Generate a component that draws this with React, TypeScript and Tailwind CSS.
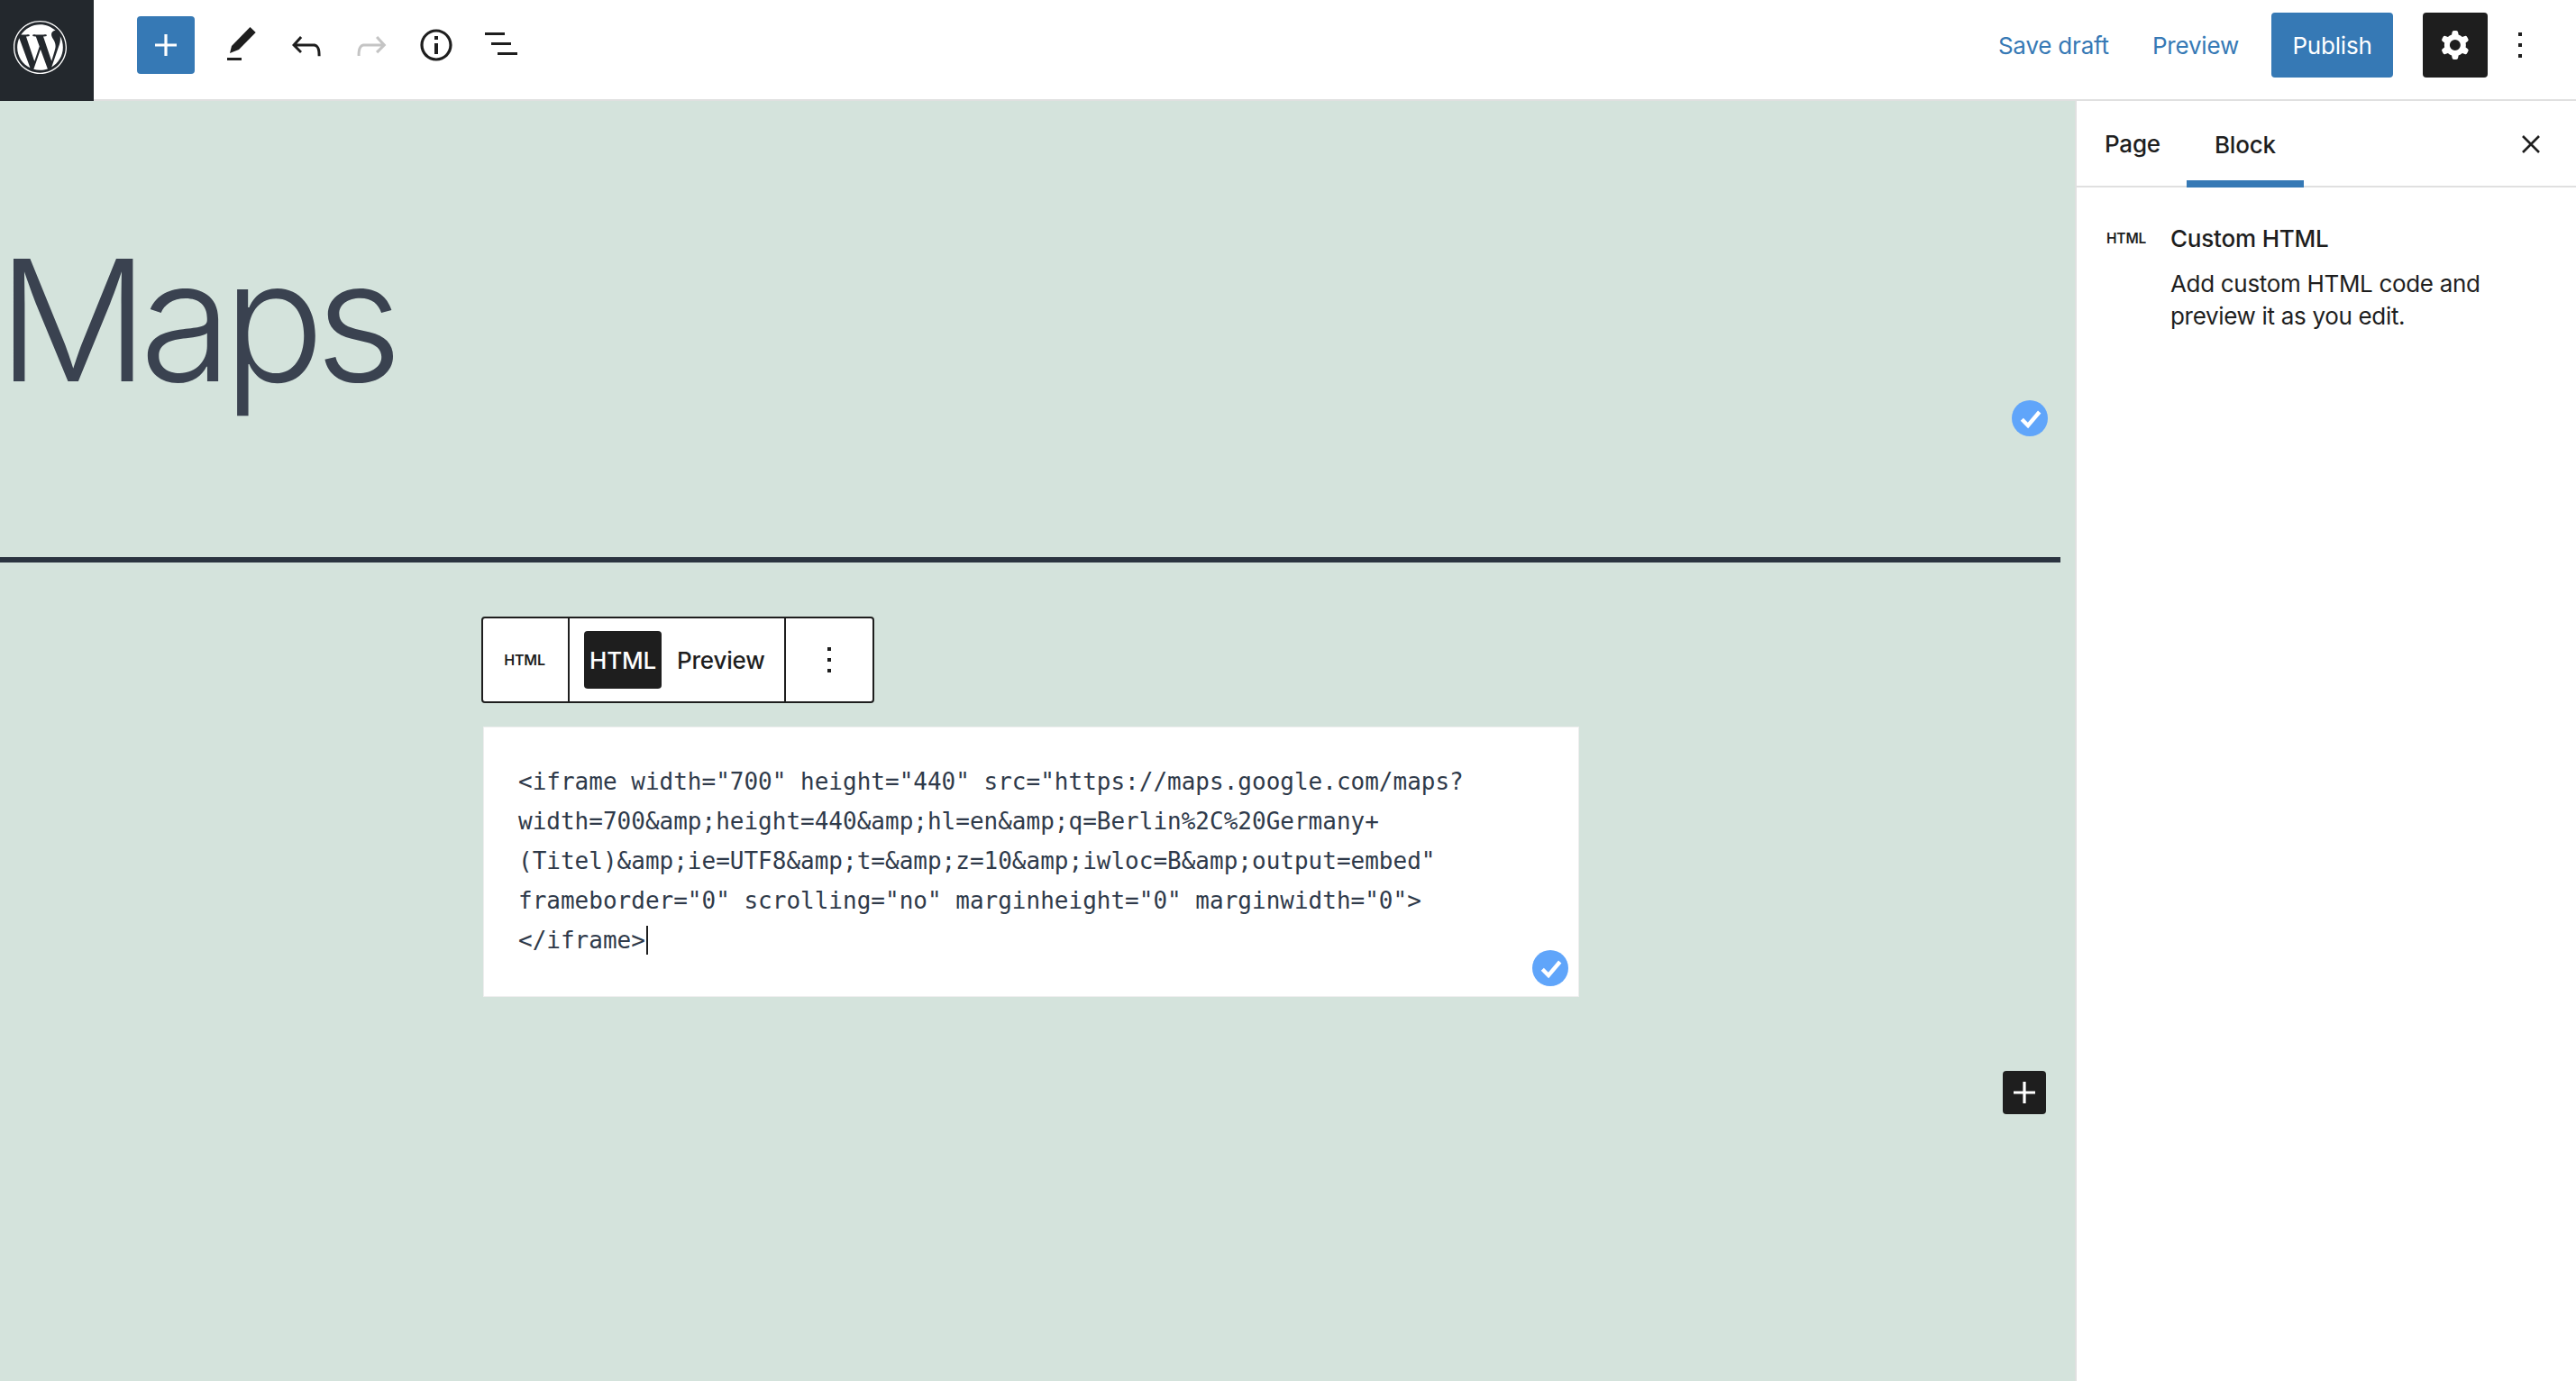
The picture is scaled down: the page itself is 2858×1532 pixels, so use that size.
import { FaWordpress } from "react-icons/fa";

const codeLines = [
  '<iframe width="700" height="440" src="https://maps.google.com/maps?',
  "width=700&amp;height=440&amp;hl=en&amp;q=Berlin%2C%20Germany+",
  "(Titel)&amp;ie=UTF8&amp;t=&amp;z=10&amp;iwloc=B&amp;output=embed\"",
  'frameborder="0" scrolling="no" marginheight="0" marginwidth="0">',
];

function CheckBadge() {
  return (
    <svg viewBox="0 0 40 40" className="h-10 w-10">
      <circle cx="20" cy="20" r="20" fill="#60a5fa" />
      <path d="M11.3 21.3l6.7 6.7L30.7 13" fill="none" stroke="#fff" strokeWidth="4.4" />
    </svg>
  );
}

function PlusIcon() {
  return (
    <svg viewBox="0 0 24 24" className="h-12 w-12" fill="currentColor">
      <path d="M18 11.2h-5.2V6h-1.6v5.2H6v1.6h5.2V18h1.6v-5.2H18z" />
    </svg>
  );
}

function Dots({ className }: { className?: string }) {
  return (
    <svg viewBox="0 0 24 24" className={className} fill="currentColor">
      <path d="M13 19h-2v-2h2v2zm0-6h-2v-2h2v2zm0-6h-2V5h2v2z" />
    </svg>
  );
}

export default function App() {
  return (
    <div className="flex h-[1532px] w-[2858px] flex-col overflow-hidden bg-white font-['Inter',sans-serif] text-[26px] tracking-[-0.2px] text-[#1e1e1e]">
      <header className="flex h-[112px] shrink-0 items-start border-b-2 border-[#e0e0e0] bg-white">
        <div className="flex h-[112px] w-[104px] shrink-0 items-center justify-center bg-[#23282d] pr-4 pb-2 text-white">
          <FaWordpress size={61} />
        </div>
        <div className="flex h-[110px] flex-1 items-center pb-[10px] pl-12 pr-[38px]">
          <button className="flex h-16 w-16 items-center justify-center rounded-[4px] bg-[#3679b5] text-white">
            <PlusIcon />
          </button>
          <svg viewBox="0 0 48 48" className="ml-[30px] h-12 w-12" fill="#1e1e1e">
            <path d="M31.5 4l6.2 6L19 29l-10 4 2-8z" />
            <rect x="6" y="38" width="16" height="3" />
          </svg>
          <svg viewBox="0 -0.5 24 24" className="ml-[22px] h-12 w-12" fill="#1e1e1e">
            <path d="M18.3 11.7c-.6-.6-1.4-.9-2.3-.9H6.7l2.9-3.3-1.1-1-4.5 5L8.5 16l1-1-2.7-2.7H16c.5 0 .9.2 1.3.5 1 1 1 3.4 1 4.5v.3h1.5v-.2c0-1.5 0-4.3-1.5-5.7z" />
          </svg>
          <svg viewBox="0 -0.5 24 24" className="ml-6 h-12 w-12" fill="#c4c4c4">
            <path d="M15.6 6.5l-1.1 1 2.9 3.3H8c-.9 0-1.7.3-2.3.9-1.4 1.5-1.4 4.2-1.4 5.6v.2h1.5v-.3c0-1.1 0-3.5 1-4.5.3-.3.7-.5 1.3-.5h9.2L14.5 15l1.1 1.1 4.6-4.6-4.6-5z" />
          </svg>
          <svg viewBox="0 0 24 24" className="ml-6 h-12 w-12" fill="#1e1e1e">
            <path d="M12 3.2c-4.8 0-8.8 3.9-8.8 8.8 0 4.8 3.9 8.8 8.8 8.8 4.8 0 8.8-3.9 8.8-8.8 0-4.8-4-8.8-8.8-8.8zm0 16c-4 0-7.2-3.3-7.2-7.2C4.8 8 8 4.8 12 4.8s7.2 3.3 7.2 7.2c0 4-3.2 7.2-7.2 7.2zM11 17h2v-6h-2v6zm0-8h2V7h-2v2z" />
          </svg>
          <svg viewBox="0 1 24 24" className="ml-6 h-12 w-12" fill="#1e1e1e">
            <path d="M3 6h11v1.5H3V6zm3.5 5.5h11V13h-11v-1.5zM21 17H10v1.5h11V17z" />
          </svg>
          <div className="ml-auto flex items-center">
            <span className="text-[#3679b5]">Save draft</span>
            <span className="ml-12 text-[#3679b5]">Preview</span>
            <button className="ml-9 flex h-[72px] w-[135px] items-center justify-center rounded-[4px] bg-[#3679b5] text-white">
              Publish
            </button>
            <button className="ml-[33px] flex h-[72px] w-[72px] items-center justify-center rounded-[4px] bg-[#1e1e1e] text-white">
              <svg viewBox="0 0 24 24" className="h-12 w-12" fill="currentColor">
                <path
                  fillRule="evenodd"
                  d="M10.289 4.836A1 1 0 0 1 11.275 4h1.306a1 1 0 0 1 .987.836l.244 1.466c.787.26 1.503.679 2.108 1.218l1.393-.522a1 1 0 0 1 1.216.437l.653 1.13a1 1 0 0 1-.23 1.273l-1.148.944a6.025 6.025 0 0 1 0 2.435l1.149.946a1 1 0 0 1 .23 1.272l-.653 1.13a1 1 0 0 1-1.216.437l-1.394-.522c-.605.54-1.32.958-2.108 1.218l-.244 1.466a1 1 0 0 1-.987.836h-1.306a1 1 0 0 1-.986-.836l-.244-1.466a5.995 5.995 0 0 1-2.108-1.218l-1.394.522a1 1 0 0 1-1.217-.436l-.653-1.131a1 1 0 0 1 .23-1.272l1.149-.946a6.026 6.026 0 0 1 0-2.435l-1.148-.944a1 1 0 0 1-.23-1.272l.653-1.131a1 1 0 0 1 1.217-.437l1.393.522a5.994 5.994 0 0 1 2.108-1.218l.244-1.466ZM14.929 12a3 3 0 1 1-6 0 3 3 0 0 1 6 0Z"
                />
              </svg>
            </button>
            <Dots className="ml-3 h-12 w-12 text-[#1e1e1e]" />
          </div>
        </div>
      </header>

      <div className="flex flex-1">
        <main className="relative flex-1 bg-[#d4e3dc]">
          <div className="h-[512px] w-[2286px] border-b-[6px] border-[#2b3440]">
            <div className="flex h-[506px] items-start justify-between pr-[14px]">
              <h1 className="-ml-[3px] mt-[131px] text-[187px] leading-[1.2] font-light tracking-[-0.055em] text-[#3a4250]">Maps</h1>
              <div className="mt-[332px]">
                <CheckBadge />
              </div>
            </div>
          </div>

          <div className="ml-[534px] mt-[60px] flex h-[96px] w-[436px] items-stretch rounded-[4px] border-2 border-[#1e1e1e] bg-white">
            <div className="flex w-[96px] items-center justify-center border-r-2 border-[#1e1e1e] pr-[2px] text-[16px] font-semibold">HTML</div>
            <div className="flex w-[240px] items-center border-r-2 border-[#1e1e1e] pl-4">
              <span className="flex h-16 w-[86px] items-center justify-center rounded-[4px] bg-[#1e1e1e] font-medium text-white">HTML</span>
              <span className="ml-[17px] font-medium">Preview</span>
            </div>
            <div className="flex flex-1 items-center justify-center">
              <Dots className="h-12 w-12" />
            </div>
          </div>

          <div className="relative ml-[536px] mt-[26px] h-[300px] w-[1216px] border border-[#eeeeee] bg-white pl-[38px] pt-[38px] font-['DejaVu_Sans_Mono',monospace] text-[26px] leading-[44px] tracking-normal whitespace-pre text-[#2f3a4a]">
            {codeLines.map((line) => (
              <div key={line}>{line}</div>
            ))}
            <div className="flex items-center">
              &lt;/iframe&gt;
              <span className="ml-px h-[32px] w-[2px] bg-[#1e1e1e]" />
            </div>
            <div className="absolute bottom-[11px] right-[11px]">
              <CheckBadge />
            </div>
          </div>

          <button className="absolute left-[2222px] top-[1076px] flex h-12 w-12 items-center justify-center rounded-[4px] bg-[#1e1e1e] text-white">
            <PlusIcon />
          </button>
        </main>

        <aside className="w-[556px] shrink-0 border-l-2 border-[#e0e0e0] bg-white">
          <div className="flex h-[96px] items-start border-b-2 border-[#e0e0e0] pl-[31px]">
            <div className="flex h-[94px] items-center font-medium">Page</div>
            <div className="ml-[29px] flex h-[96px] w-[130px] items-center justify-center border-b-[8px] border-[#3679b5] pt-2 font-medium">Block</div>
            <svg viewBox="0 0 24 24" className="ml-auto mr-[38px] mt-[36px] h-6 w-6" fill="none" stroke="#1e1e1e" strokeWidth="2.6">
              <path d="M3 3l18 18M21 3L3 21" />
            </svg>
          </div>
          <div className="flex pl-[33px] pt-[39px]">
            <div className="w-[71px] pt-[6px] text-[15.5px] font-semibold">HTML</div>
            <div>
              <div className="font-medium leading-9">Custom HTML</div>
              <p className="mt-[14px] w-[420px] leading-9 tracking-[-0.32px]">Add custom HTML code and preview it as you edit.</p>
            </div>
          </div>
        </aside>
      </div>
    </div>
  );
}
